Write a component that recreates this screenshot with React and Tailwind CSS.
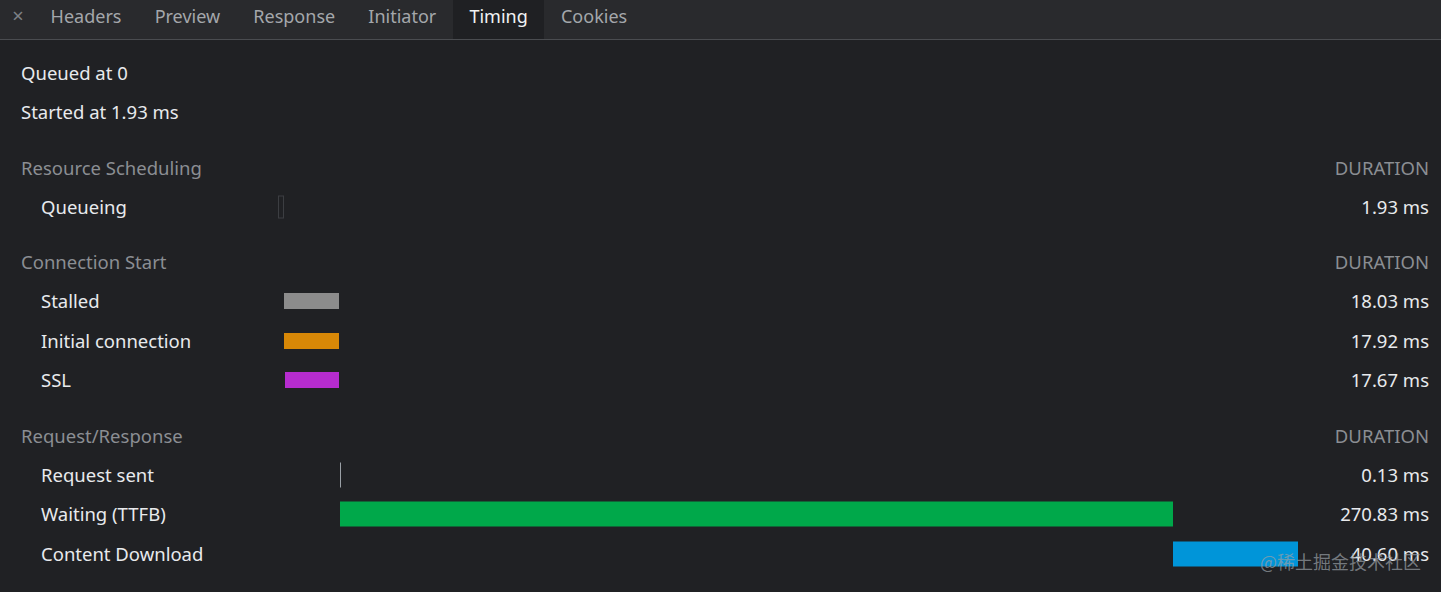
import React from "react";

const tabs = ["Headers", "Preview", "Response", "Initiator", "Timing", "Cookies"];

const SCALE = 1020 / 331.52;

const sections = [
  {
    title: "Resource Scheduling",
    rows: [{ label: "Queueing", start: 0, len: 1.93, kind: "outline", dur: "1.93 ms" }],
  },
  {
    title: "Connection Start",
    rows: [
      { label: "Stalled", start: 1.93, len: 18.03, color: "#8c8c8c", h: 16, dur: "18.03 ms" },
      { label: "Initial connection", start: 1.93, len: 17.92, color: "#d88807", h: 16, dur: "17.92 ms" },
      { label: "SSL", start: 2.25, len: 17.67, color: "#b62ccf", h: 16, dur: "17.67 ms" },
    ],
  },
  {
    title: "Request/Response",
    rows: [
      { label: "Request sent", start: 19.96, len: 0.13, kind: "line", dur: "0.13 ms" },
      { label: "Waiting (TTFB)", start: 20.09, len: 270.83, color: "#00a84a", h: 25, dur: "270.83 ms" },
      { label: "Content Download", start: 290.92, len: 40.6, color: "#0095d9", h: 25, dur: "40.60 ms" },
    ],
  },
];

function Bar({ row }) {
  const left = row.start * SCALE;
  const width = Math.max(1, row.len * SCALE);
  if (row.kind === "outline") {
    return (
      <div
        className="absolute top-1/2 -translate-y-1/2 h-[23px] border border-[#3c3e42]"
        style={{ left, width: Math.max(6, width) }}
      />
    );
  }
  if (row.kind === "line") {
    return (
      <div
        className="absolute top-1/2 -translate-y-1/2 h-[25px] w-px bg-[#9aa0a6]"
        style={{ left: left + 1 }}
      />
    );
  }
  return (
    <div
      className="absolute top-1/2 -translate-y-1/2"
      style={{ left, width, height: row.h, background: row.color }}
    />
  );
}

export default function App() {
  return (
    <div
      className="relative w-[1441px] h-[592px] overflow-hidden bg-[#202124] text-[#e8eaed] text-[18.5px]"
      style={{ fontFamily: '"Segoe UI", "Noto Sans", "Open Sans", sans-serif' }}
    >
      <div className="flex items-stretch h-[40px] bg-[#292a2d] border-b border-[#4a4c50] text-[18px]">
        <div className="w-[34px] flex items-center justify-center text-[#7d8186] text-[20px] pb-[8px] pl-[2px]">×</div>
        {tabs.map((t) => (
          <div
            key={t}
            className={
              "flex items-center px-[16.6px] pb-[6px] " +
              (t === "Timing" ? "bg-[#1f2023] text-[#f1f3f4]" : "text-[#a4a7ab]")
            }
          >
            {t}
          </div>
        ))}
      </div>

      <div className="pl-[21px] pr-[12px] pt-[13px]">
        <div className="h-[39px] flex items-center">Queued at 0</div>
        <div className="h-[39px] flex items-center">Started at 1.93 ms</div>
        {sections.map((s, i) => (
          <div key={s.title} className={i === 0 ? "mt-[17px]" : "mt-[16px]"}>
            <div className="h-[39px] flex items-center justify-between text-[#8b8e93]">
              <span>{s.title}</span>
              <span>DURATION</span>
            </div>
            {s.rows.map((r) => (
              <div key={r.label} className="h-[39.5px] flex items-center">
                <div className="w-[257px] pl-[20px] shrink-0">{r.label}</div>
                <div className="relative h-full w-[1020px] shrink-0">
                  <Bar row={r} />
                </div>
                <div className="flex-1 text-right">{r.dur}</div>
              </div>
            ))}
          </div>
        ))}
      </div>

      <div
        className="absolute left-[1260px] top-[548px] text-[18px] text-[#9aa0a6]/70"
        style={{ fontFamily: '"Noto Sans CJK SC", "Noto Sans", sans-serif' }}
      >
        @稀土掘金技术社区
      </div>
    </div>
  );
}
